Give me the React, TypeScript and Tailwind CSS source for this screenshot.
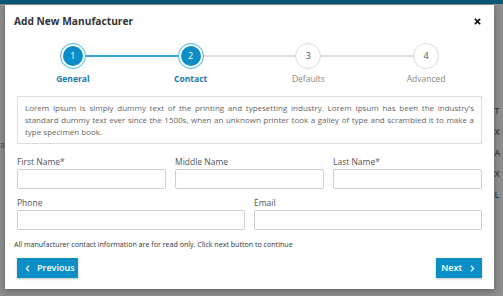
import React from 'react';
import { FaTimes, FaChevronLeft, FaChevronRight } from 'react-icons/fa';

const STEPS = [
  { num: 1, label: 'General', done: true },
  { num: 2, label: 'Contact', done: true },
  { num: 3, label: 'Defaults', done: false },
  { num: 4, label: 'Advanced', done: false },
];

const INFO =
  "Lorem Ipsum is simply dummy text of the printing and typesetting industry. Lorem Ipsum has been the industry's standard dummy text ever since the 1500s, when an unknown printer took a galley of type and scrambled it to make a type specimen book.";

function Field({ label }: { label: string }) {
  return (
    <div className="flex flex-col">
      <label className="text-[8.5px] leading-[12px] text-[#555]">{label}</label>
      <input className="mt-px h-[20px] w-full rounded-[2px] border border-[#cfcfcf] bg-white outline-none" />
    </div>
  );
}

function Stepper() {
  return (
    <div className="grid grid-cols-4 px-[9px]">
      {STEPS.map((step, i) => {
        // line halves: left half belongs to previous connection, right half to next
        const leftLine = i === 0 ? 'bg-transparent' : STEPS[i].done ? 'bg-[#3aa3d6]' : 'bg-[#dedede]';
        const rightLine =
          i === STEPS.length - 1 ? 'bg-transparent' : STEPS[i + 1].done ? 'bg-[#3aa3d6]' : 'bg-[#dedede]';
        return (
          <div key={step.num} className="flex flex-col items-center">
            <div className="flex w-full items-center">
              <div className={`h-[2px] flex-1 ${leftLine}`} />
              {step.done ? (
                <div className="h-[26px] w-[26px] rounded-full border-[1.5px] border-[#3fb0e0] bg-white p-[2px]">
                  <div className="flex h-full w-full items-center justify-center rounded-full bg-[#0b8ec7] text-[9px] text-white">
                    {step.num}
                  </div>
                </div>
              ) : (
                <div className="flex h-[26px] w-[26px] items-center justify-center rounded-full border-[1.5px] border-[#dcdcdc] bg-white text-[9px] text-[#555]">
                  {step.num}
                </div>
              )}
              <div className={`h-[2px] flex-1 ${rightLine}`} />
            </div>
            <span
              className={`mt-[3px] text-[8.5px] leading-[14px] ${
                step.done ? 'font-bold text-[#2079a8]' : 'text-[#888]'
              }`}
            >
              {step.label}
            </span>
          </div>
        );
      })}
    </div>
  );
}

export default function App() {
  return (
    <div
      className="relative h-[296px] w-[503px] overflow-hidden bg-[#8c8c8c]"
      style={{ fontFamily: '"Open Sans", "Liberation Sans", sans-serif' }}
    >
      {/* page behind the overlay */}
      <div className="h-[4px] bg-[#0b5878]" />
      <div className="flex justify-between">
        <div className="mt-[135px] text-[8px] text-[#333]">3</div>
        <div className="flex flex-col items-start pr-[3px] pt-[96px] text-[8.5px] font-semibold leading-[21px] text-[#3a3a3a]">
          <span>T</span>
          <span>X</span>
          <span>A</span>
          <span>X</span>
          <span>L</span>
        </div>
      </div>

      {/* MODAL */}
      <div className="absolute left-[5px] top-[5px] flex h-[284px] w-[489px] flex-col bg-white shadow-[0_2px_6px_rgba(0,0,0,0.3)]">
        {/* header */}
        <div className="flex items-center justify-between pl-[9px] pr-[12px] pt-[7px]">
          <h2 className="text-[10.2px] font-bold leading-[18px] text-[#333]">Add New Manufacturer</h2>
          <FaTimes size={9} className="text-[#111]" />
        </div>

        <div className="mt-[13px]">
          <Stepper />
        </div>

        {/* info */}
        <div className="mx-[12px] mt-[10px] border border-[#dddddd] px-[7px] py-[5px] text-justify text-[8px] leading-[12px] text-[#666]">
          {INFO}
        </div>

        {/* form */}
        <div className="mx-[12px] mt-[12px] grid grid-cols-3 gap-x-[9px]">
          <Field label="First Name*" />
          <Field label="Middle Name" />
          <Field label="Last Name*" />
        </div>
        <div className="mx-[12px] mt-[8px] grid grid-cols-2 gap-x-[9px]">
          <Field label="Phone" />
          <Field label="Email" />
        </div>

        <p className="ml-[9px] mt-[8px] text-[7.1px] leading-[12px] text-[#333]">
          All manufacturer contact information are for read only. Click next button to continue
        </p>

        {/* footer */}
        <div className="mx-[12px] mt-[8px] flex justify-between">
          <button className="flex h-[20px] w-[61px] items-center gap-[6px] bg-[#0b8fc7] pl-[7px] text-[9px] font-semibold text-white shadow-[0_1px_2px_rgba(0,0,0,0.25)]">
            <FaChevronLeft size={7} />
            Previous
          </button>
          <button className="flex h-[20px] w-[46px] items-center justify-end gap-[7px] bg-[#0b8fc7] pr-[6px] text-[9px] font-semibold text-white shadow-[0_1px_2px_rgba(0,0,0,0.25)]">
            Next
            <FaChevronRight size={7} />
          </button>
        </div>
      </div>
    </div>
  );
}
